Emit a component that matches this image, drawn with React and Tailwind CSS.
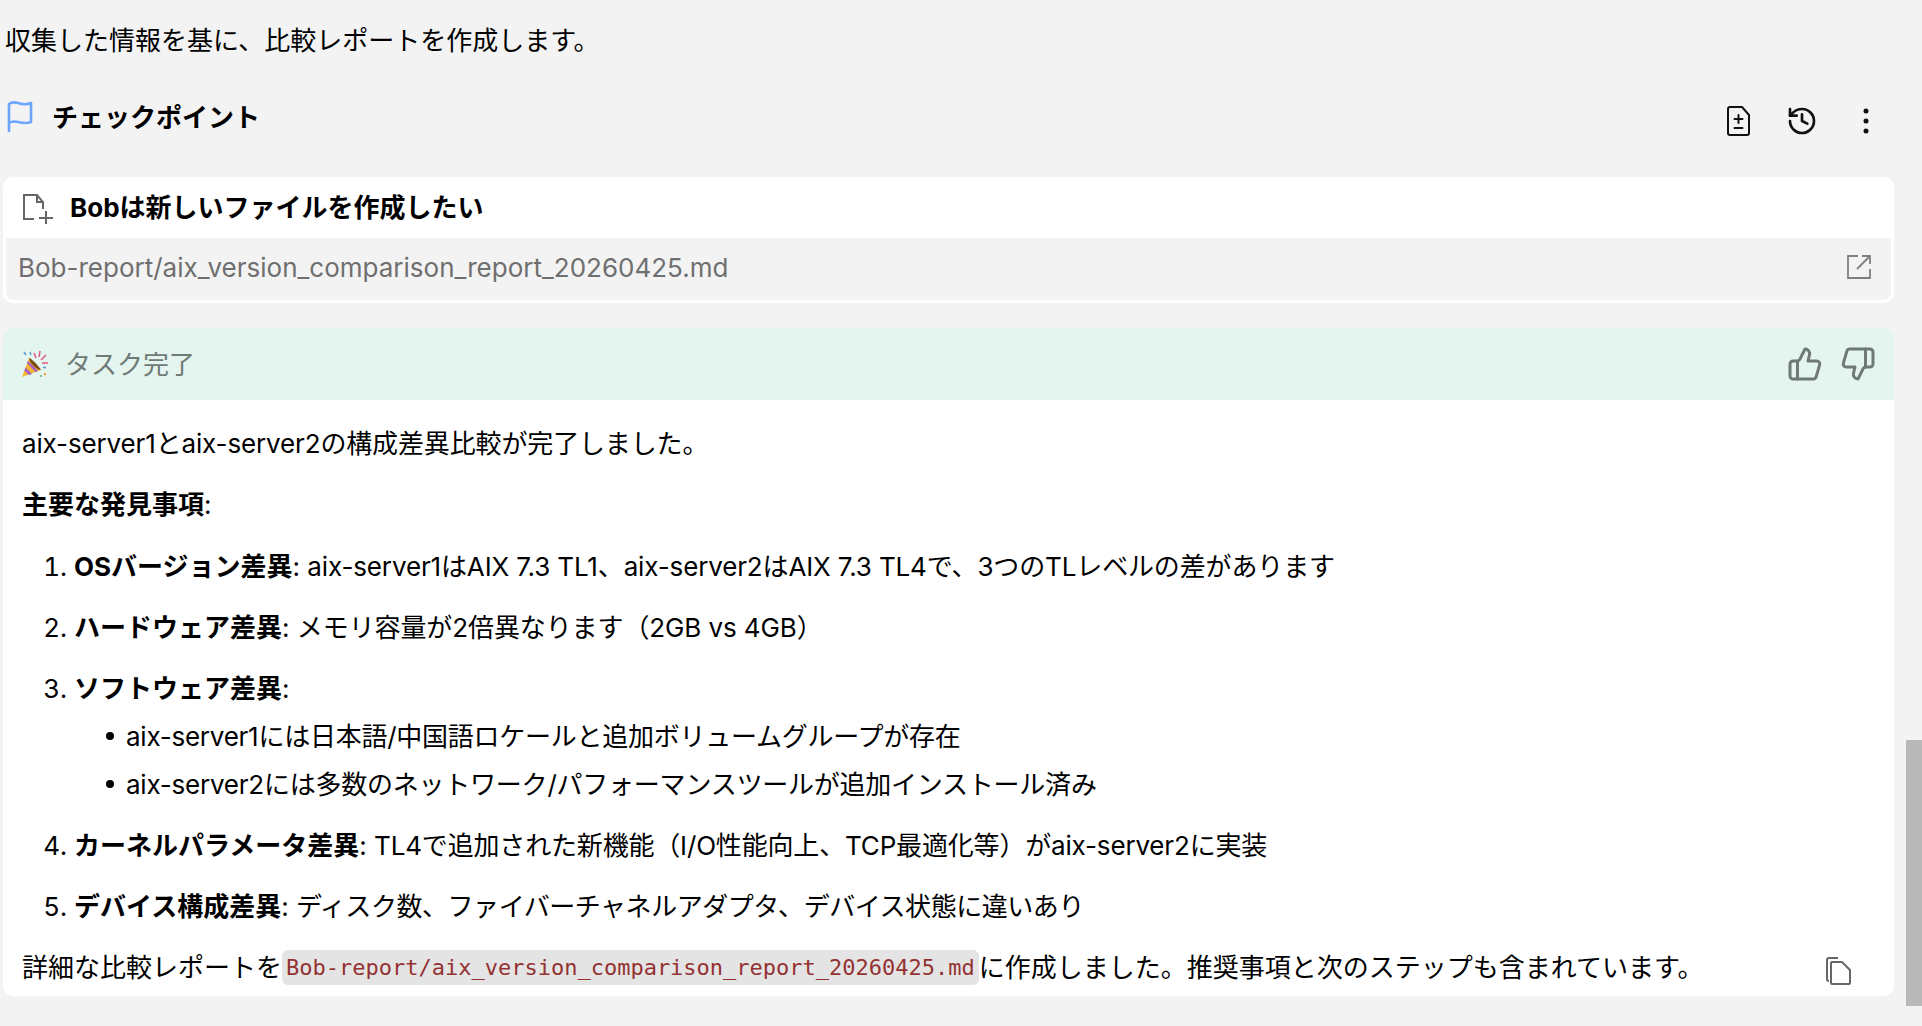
import React from "react";
import { History, ThumbsDown, ThumbsUp } from "lucide-react";

const font = { fontFamily: '"Inter", "Noto Sans CJK JP", sans-serif' };

function FlagIcon() {
  return (
    <svg width="26" height="32" viewBox="0 0 26 32" fill="none" stroke="#6ea6ff" strokeWidth="2.6" strokeLinejoin="round" strokeLinecap="round">
      <path d="M2 30V3c3-2 6-2 9-1s8 2 13 0v19c-5 2-9 1-13 0s-6-1-9 1" />
    </svg>
  );
}

function FileDiffIcon() {
  return (
    <svg width="24" height="30" viewBox="0 0 24 30" fill="none" stroke="#111" strokeWidth="2" strokeLinecap="round" strokeLinejoin="round">
      <path d="M3 1h12l7 8v18a2 2 0 0 1-2 2H3a2 2 0 0 1-2-2V3a2 2 0 0 1 2-2z" />
      <path d="M11.5 9v8M7.5 13h8M7.5 22h8" />
    </svg>
  );
}

function DotsIcon() {
  return (
    <svg width="32" height="32" viewBox="0 0 32 32" fill="#111">
      <circle cx="16" cy="6" r="2.5" />
      <circle cx="16" cy="16" r="2.5" />
      <circle cx="16" cy="26" r="2.5" />
    </svg>
  );
}

function NewFileIcon() {
  return (
    <svg width="32" height="32" viewBox="0 0 32 32" fill="none" stroke="#666" strokeWidth="2">
      <path d="M12 26H2V2h13l6 7v7M15 2v7h6" />
      <path d="M24 18v13M17 25h14" />
    </svg>
  );
}

function OpenIcon() {
  return (
    <svg width="24" height="24" viewBox="0 0 24 24" fill="none" stroke="#808080" strokeWidth="1.8">
      <path d="M11 1H1v22h22V14" />
      <path d="M15 1h8v8M23 1 10 14" />
    </svg>
  );
}

function CopyIcon() {
  return (
    <svg width="26" height="30" viewBox="0 0 26 30" fill="none" stroke="#666" strokeWidth="2" strokeLinejoin="round">
      <path d="M3 25a2 2 0 0 1-2-2V4a2 2 0 0 1 2-2h9" />
      <path d="M6 6h10l8 8v13a1 1 0 0 1-1 1H6a1 1 0 0 1-1-1V7a1 1 0 0 1 1-1z" />
    </svg>
  );
}

function PartyIcon() {
  return (
    <svg width="28" height="28" viewBox="0 0 28 28">
      <path d="M1 27 8 8l12 12z" fill="#f2b632" />
      <path d="M4.5 17.5 11 24l-3 1-4.5-4.5zM7 11l10 10-2.5 1L6 13z" fill="#a35fc9" />
      <path d="M8 8c3 1 9 7 12 12-4 0-11-6-12-12z" fill="#7b4a12" />
      <g fill="none" strokeWidth="1.5">
        <path d="M13 3l2 5M19 1l-1 6M25 5l-5 5M27 13h-6" stroke="#e0578a" />
        <path d="M3 2l2 3M9 2l1 3M22 17l3 1" stroke="#5b9bd8" />
      </g>
      <circle cx="24" cy="24" r="1.2" fill="#e8a33a" />
      <circle cx="20" cy="26" r="1" fill="#5bb86a" />
    </svg>
  );
}

// kana-heavy lines run a little tighter in the reference, so each row carries its own tracking
function Item({ n, label, children, nested, track }) {
  return (
    <div>
      <div className="flex h-[61px] items-center">
        <span className="w-[71px] pr-[7px] text-right tabular-nums">{n}.</span>
        <span>
          <b className="font-bold">{label}</b>: <span className={track}>{children}</span>
        </span>
      </div>
      {nested && (
        <ul className="-mt-[7px] mb-[7px]">
          {nested.map((row) => (
            <li key={row.text} className="flex h-[48px] items-center pl-[103px]">
              <span className="mr-[12px] h-[8px] w-[8px] rounded-full bg-black" />
              <span className={row.track}>{row.text}</span>
            </li>
          ))}
        </ul>
      )}
    </div>
  );
}

export default function App() {
  return (
    <div className="flex h-[1026px] w-full overflow-hidden bg-[#f3f3f3] text-[26px] text-black" style={font}>
      <div className="w-[1906px] shrink-0 pl-[3px] pr-[12px]">
        <p className="flex h-[81px] items-center pl-[2px]">収集した情報を基に、比較レポートを作成します。</p>

        {/* Checkpoint */}
        <div className="flex h-[72px] items-center pl-[4px]">
          <FlagIcon />
          <span className="ml-[19px] font-bold">チェックポイント</span>
          <div className="ml-auto mt-[8px] flex items-center pr-[12px] text-[#111]">
            <FileDiffIcon />
            <span className="ml-[35px]">
              <History size={32} strokeWidth={2} />
            </span>
            <span className="ml-[32px]">
              <DotsIcon />
            </span>
          </div>
        </div>

        <div className="mt-[24px] overflow-hidden rounded-[10px] border-[3px] border-t-0 border-white bg-white">
          <div className="flex h-[61px] items-center pl-[16px]">
            <span className="mt-[3px]">
              <NewFileIcon />
            </span>
            <span className="ml-[16px] font-bold">Bobは新しいファイルを作成したい</span>
          </div>
          <div className="flex h-[62px] items-center justify-between bg-[#f3f3f3] pb-[4px] pl-[12px] pr-[20px] text-[#6f6f6f]">
            <span>Bob-report/aix_version_comparison_report_20260425.md</span>
            <OpenIcon />
          </div>
        </div>

        {/* Task finished */}
        <div className="mt-[25px] overflow-hidden rounded-[10px] bg-white">
          <div className="flex h-[72px] items-center bg-[#e4f4ee] pl-[18px] pr-[18px]">
            <PartyIcon />
            <span className="ml-[16px] text-[#6f7a76]">タスク完了</span>
            <div className="ml-auto flex items-center gap-[17px] text-[#6f7a76]">
              <ThumbsUp size={36} strokeWidth={2} />
              <ThumbsDown size={36} strokeWidth={2} />
            </div>
          </div>
          <div className="h-[596px]">
            <p className="flex h-[87px] items-center pl-[19px] tracking-[-0.14px]">aix-server1とaix-server2の構成差異比較が完了しました。</p>
            <p className="flex h-[34px] items-center pl-[19px]">
              <b className="font-bold">主要な発見事項</b>:
            </p>
            <div className="mt-[15px]">
              <Item n="1" label="OSバージョン差異" track="tracking-[-0.14px]">aix-server1はAIX 7.3 TL1、aix-server2はAIX 7.3 TL4で、3つのTLレベルの差があります</Item>
              <Item n="2" label="ハードウェア差異" track="tracking-[-0.1px]">メモリ容量が2倍異なります（2GB vs 4GB）</Item>
              <Item
                n="3"
                label="ソフトウェア差異"
                nested={[
                  { text: "aix-server1には日本語/中国語ロケールと追加ボリュームグループが存在", track: "tracking-[-0.25px]" },
                  { text: "aix-server2には多数のネットワーク/パフォーマンスツールが追加インストール済み", track: "tracking-[-0.23px]" },
                ]}
              />
              <Item n="4" label="カーネルパラメータ差異" track="tracking-[-0.17px]">TL4で追加された新機能（I/O性能向上、TCP最適化等）がaix-server2に実装</Item>
              <Item n="5" label="デバイス構成差異" track="tracking-[-0.45px]">ディスク数、ファイバーチャネルアダプタ、デバイス状態に違いあり</Item>
            </div>
            <div className="mt-[2px] flex h-[57px] items-center pl-[19px] pr-[42px]">
              <span>詳細な比較レポートを</span>
              <code className="rounded-[6px] bg-[#e4e4e4] px-[4px] py-[1px] text-[22px] text-[#943232]" style={{ fontFamily: '"DejaVu Sans Mono", monospace' }}>
                Bob-report/aix_version_comparison_report_20260425.md
              </code>
              <span>に作成しました。推奨事項と次のステップも含まれています。</span>
              <span className="ml-auto mt-[6px]">
                <CopyIcon />
              </span>
            </div>
          </div>
        </div>
      </div>

      {/* Scrollbar */}
      <div className="w-[16px] shrink-0 pt-[740px] pb-[20px]">
        <div className="h-full bg-[#b8b8b8]" />
      </div>
    </div>
  );
}
